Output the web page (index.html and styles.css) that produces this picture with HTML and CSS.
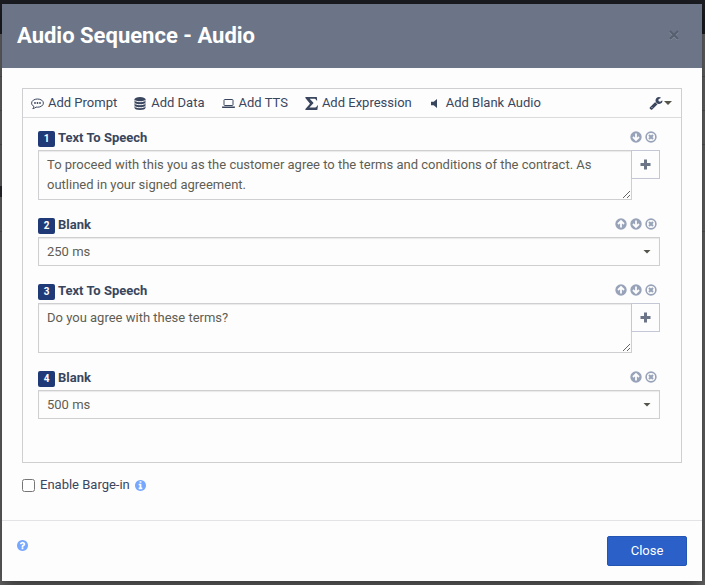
FILE: index.html
```html
<!DOCTYPE html>
<html lang="en">
<head>
<meta charset="utf-8">
<meta name="viewport" content="width=device-width, initial-scale=1">
<title>Audio Sequence - Audio</title>
<link rel="stylesheet" href="styles.css">
</head>
<body>
<svg class="sprite" aria-hidden="true">
  <symbol id="up" viewBox="0 0 12 12"><circle cx="6" cy="6" r="5.700" fill="currentColor"/><path d="M6 9.600V3M3 6 6 3l3 3" fill="none" stroke="#fdfdfd" stroke-width="1.800"/></symbol>
  <symbol id="down" viewBox="0 0 12 12"><circle cx="6" cy="6" r="5.700" fill="currentColor"/><path d="M6 2.400V9M3 6l3 3 3-3" fill="none" stroke="#fdfdfd" stroke-width="1.800"/></symbol>
  <symbol id="remove" viewBox="0 0 12 12"><circle cx="6" cy="6" r="4.900" fill="none" stroke="currentColor" stroke-width="1.600"/><path d="m4 4 4 4m0-4L4 8" stroke="currentColor" stroke-width="2.100"/></symbol>
  <symbol id="plus" viewBox="0 0 12 12"><path d="M5.500.500v10M.500 5.500h10" stroke="currentColor" stroke-width="3"/></symbol>
</svg>
<div class="modal" role="dialog" aria-labelledby="title">
  <header class="modal-header">
    <h1 id="title">Audio Sequence - Audio</h1>
    <button class="dismiss" type="button" aria-label="Dismiss"><svg viewBox="0 0 10 10"><path d="m1 2 8 8m0-8-8 8" stroke="#858d9c" stroke-width="2"/><path d="m1 1 8 8m0-8-8 8" stroke="#565f6e" stroke-width="2"/></svg></button>
  </header>
  <main class="modal-body">
    <section class="panel">
      <div class="toolbar">
        <button class="tool" type="button"><svg viewBox="0 0 13 13"><path d="M6.500 2C9.700 2 12.400 3.700 12.400 6.100S9.700 10.200 6.500 10.200c-.5 0-1 0-1.400-.1-1 .8-2 1.300-3.300 1.500.6-.6 1-1.300 1.100-2.200C1.500 8.700.6 7.500.6 6.100.6 3.700 3.300 2 6.500 2Z" fill="none" stroke="currentColor"/><circle cx="4" cy="6" r=".9" fill="currentColor"/><circle cx="6.500" cy="6" r=".9" fill="currentColor"/><circle cx="9" cy="6" r=".9" fill="currentColor"/></svg>Add Prompt</button>
        <button class="tool" type="button"><svg viewBox="0 0 13 13"><path d="M.5 2.300v8.400C.5 12 3 13 6 13s5.500-1 5.500-2.300V2.300C11.500 1 9 0 6 0S.5 1 .5 2.300Z" fill="currentColor"/><path d="M.5 3.200c1 1 3 1.500 5.500 1.500s4.500-.5 5.500-1.500M.5 6.200c1 1 3 1.500 5.500 1.500s4.500-.5 5.500-1.500M.5 9.200c1 1 3 1.500 5.500 1.500s4.500-.5 5.500-1.500" fill="none" stroke="#fdfdfd"/></svg>Add Data</button>
        <button class="tool" type="button"><svg viewBox="0 0 13 13"><rect x="2" y="2.500" width="9" height="6" rx=".7" fill="none" stroke="currentColor"/><path d="M0 9.500h13v.7c0 .5-.6.900-1.300.9H1.300C.6 11.100 0 10.700 0 10.200Z" fill="currentColor"/></svg>Add TTS</button>
        <button class="tool" type="button"><svg viewBox="0 0 13 13"><path d="M.4 0h11.400l.4 3.500h-.8c-.4-1.200-1-1.700-2.400-1.700H4.700l3.900 4.300-4.200 4.500h5c1.500 0 2.300-.6 2.800-2h.8l-.7 4.300H.4V12L5 6.700.4 1Z" fill="currentColor"/></svg>Add Expression</button>
        <button class="tool" type="button"><svg viewBox="0 0 13 13"><path d="M8 2v9L4.700 8.200H2V4.800h2.700Z" fill="currentColor"/></svg>Add Blank Audio</button>
        <button class="settings" type="button" aria-label="Settings"><svg viewBox="0 0 1792 1792"><path fill="currentColor" d="M448 1472q0-26-19-45t-45-19-45 19-19 45 19 45 45 19 45-19 19-45zm644-420l-682 682q-37 37-90 37-52 0-91-37l-106-108q-38-36-38-90 0-53 38-91l681-681q39 98 114.500 173.500t173.500 114.500zm634-435q0 39-23 106-47 134-164.500 217.500t-258.500 83.500q-185 0-316.500-131.500t-131.500-316.500 131.500-316.500 316.500-131.500q58 0 121.500 16.500t107.500 46.500q16 11 16 28t-16 28l-293 169v224l193 107q5-3 79-48.500t135.500-81 70.500-35.500q15 0 23.500 10t8.500 25z"/></svg><span class="caret"></span></button>
      </div>
      <ol class="steps">
        <li>
          <div class="step-head"><span class="badge">1</span><label for="s1">Text To Speech</label>
            <span class="actions"><button type="button" aria-label="Move down"><svg><use href="#down"/></svg></button><button type="button" aria-label="Remove"><svg><use href="#remove"/></svg></button></span></div>
          <div class="speech"><textarea id="s1" rows="2">To proceed with this you as the customer agree to the terms and conditions of the contract. As outlined in your signed agreement.</textarea><button class="insert" type="button" aria-label="Insert"><svg><use href="#plus"/></svg></button></div>
        </li>
        <li>
          <div class="step-head"><span class="badge">2</span><label for="s2">Blank</label>
            <span class="actions"><button type="button" aria-label="Move up"><svg><use href="#up"/></svg></button><button type="button" aria-label="Move down"><svg><use href="#down"/></svg></button><button type="button" aria-label="Remove"><svg><use href="#remove"/></svg></button></span></div>
          <div class="pick"><select id="s2"><option>250 ms</option></select><span class="caret"></span></div>
        </li>
        <li>
          <div class="step-head"><span class="badge">3</span><label for="s3">Text To Speech</label>
            <span class="actions"><button type="button" aria-label="Move up"><svg><use href="#up"/></svg></button><button type="button" aria-label="Move down"><svg><use href="#down"/></svg></button><button type="button" aria-label="Remove"><svg><use href="#remove"/></svg></button></span></div>
          <div class="speech"><textarea id="s3" rows="2">Do you agree with these terms?</textarea><button class="insert" type="button" aria-label="Insert"><svg><use href="#plus"/></svg></button></div>
        </li>
        <li>
          <div class="step-head"><span class="badge">4</span><label for="s4">Blank</label>
            <span class="actions"><button type="button" aria-label="Move up"><svg><use href="#up"/></svg></button><button type="button" aria-label="Remove"><svg><use href="#remove"/></svg></button></span></div>
          <div class="pick"><select id="s4"><option>500 ms</option></select><span class="caret"></span></div>
        </li>
      </ol>
    </section>
    <div class="option">
      <input type="checkbox" id="barge"><label for="barge">Enable Barge-in</label>
      <svg class="hint" viewBox="128 128 1536 1536"><path fill="currentColor" d="M1152 1376v-160q0-14-9-23t-23-9h-96v-512q0-14-9-23t-23-9h-320q-14 0-23 9t-9 23v160q0 14 9 23t23 9h96v320h-96q-14 0-23 9t-9 23v160q0 14 9 23t23 9h448q14 0 23-9t9-23zm-128-896v-160q0-14-9-23t-23-9h-192q-14 0-23 9t-9 23v160q0 14 9 23t23 9h192q14 0 23-9t9-23zm640 416q0 209-103 385.500t-279.500 279.500-385.500 103-385.500-103-279.500-279.500-103-385.500 103-385.500 279.500-279.500 385.500-103 385.500 103 279.500 279.500 103 385.500z"/></svg>
    </div>
  </main>
  <footer class="modal-footer">
    <a class="help" href="#" aria-label="Help"><svg class="hint" viewBox="128 128 1536 1536"><path fill="currentColor" d="M1024 1376v-192q0-14-9-23t-23-9h-192q-14 0-23 9t-9 23v192q0 14 9 23t23 9h192q14 0 23-9t9-23zm256-672q0-88-55.500-163t-138.500-116-170-41q-243 0-371 213-15 24 8 42l132 100q7 6 19 6 16 0 25-12 53-68 86-92 34-24 86-24 48 0 85.500 26t37.500 59q0 38-20 61t-68 45q-63 28-115.500 86.500t-52.500 125.500v36q0 14 9 23t23 9h192q14 0 23-9t9-23q0-19 21.500-49.500t54.500-49.500q32-18 49-28.500t46-35 44.500-48 28-60.500 12.500-81zm384 192q0 209-103 385.500t-279.500 279.500-385.500 103-385.500-103-279.500-279.500-103-385.500 103-385.500 279.500-279.500 385.500-103 385.500 103 279.500 279.500 103 385.500z"/></svg></a>
    <button class="close" type="button">Close</button>
  </footer>
</div>
</body>
</html>
```
FILE: styles.css
```css
* { box-sizing: border-box; }
html { min-height: 100%; background: #666; }
body {
  margin: 0;
  padding: 4px 3px 4px 2px;
  min-height: 100vh;
  background:
    linear-gradient(#1b1d22, #1b1d22) 0 0 / 100% 34px no-repeat,
    linear-gradient(#555, #555) 0 76px / 100% 1px no-repeat,
    linear-gradient(#555, #555) 0 110px / 100% 1px no-repeat,
    linear-gradient(#555, #555) 0 144px / 100% 1px no-repeat,
    linear-gradient(#2a2c30, #2a2c30) 0 186px / 2px 11px no-repeat,
    linear-gradient(#555, #555) 0 231px / 100% 1px no-repeat,
    #666;
  font: 13px/20px Roboto, sans-serif;
  color: #3a465e;
}
button {
  font: inherit;
  color: inherit;
  background: none;
  border: 0;
  padding: 0;
  cursor: pointer;
}
svg { display: block; flex: none; }
.sprite { width: 0; height: 0; position: absolute; }
.modal { background: #fdfdfd; box-shadow: 0 5px 15px rgba(0, 0, 0, .5); }
.modal-header {
  display: flex;
  align-items: center;
  justify-content: space-between;
  height: 64px;
  padding: 0 23px 0 15px;
  background: #6c7587;
}
h1 { margin: 0; font-size: 22px; line-height: 30px; font-weight: 700; color: #fff; }
.dismiss { padding-bottom: 2px; }
.dismiss svg { width: 10px; height: 10px; }
.modal-body { padding: 20px 20px 25px; }
.panel { border: 1px solid #cfcfd1; min-height: 375px; }
.toolbar {
  display: flex;
  align-items: center;
  gap: 17px;
  height: 29px;
  padding: 0 9px 0 8px;
  border-bottom: 1px solid #dcdcde;
}
.tool { display: flex; align-items: center; gap: 4px; white-space: nowrap; }
.tool svg { width: 13px; height: 13px; }
.settings { display: flex; align-items: center; gap: 1px; margin-left: auto; }
.settings svg { width: 14px; height: 14px; }
.caret {
  width: 8px;
  height: 4px;
  background: #55544a;
  clip-path: polygon(0 0, 100% 0, 50% 100%);
}
.steps {
  list-style: none;
  margin: 0;
  padding: 13px 21px 24px 15px;
  display: grid;
  gap: 18px;
}
.step-head { display: flex; align-items: flex-start; height: 19px; gap: 3px; }
.badge {
  width: 17px;
  height: 16px;
  border-radius: 2px;
  background: #1f3a76;
  color: #fff;
  font-size: 10px;
  line-height: 16px;
  font-weight: 700;
  text-align: center;
}
.step-head label { font-weight: 700; line-height: 14px; }
.actions { display: flex; gap: 3px; margin-left: auto; padding-right: 3px; color: #98a3b9; }
.actions svg { width: 12px; height: 12px; }
.speech { display: flex; align-items: flex-start; }
textarea {
  display: block;
  flex: 1;
  min-width: 0;
  height: 50px;
  margin: 0;
  padding: 4px 8px;
  border: 1px solid #cfcfd1;
  border-radius: 0;
  background: #fdfdfd;
  box-shadow: inset 0 1px 1px rgba(0, 0, 0, .08);
  font: inherit;
  color: #5f5e54;
  overflow: hidden;
  resize: vertical;
}
.insert {
  display: grid;
  place-items: center;
  width: 29px;
  height: 29px;
  margin-left: -1px;
  border: 1px solid #c4c8d6;
  background: #fdfdfd;
  color: #6c7587;
}
.insert svg { width: 12px; height: 12px; }
.pick { display: grid; align-items: center; }
.pick > * { grid-area: 1 / 1; }
.pick .caret { justify-self: end; margin-right: 9px; pointer-events: none; }
select {
  appearance: none;
  width: 100%;
  height: 29px;
  margin: 0;
  padding: 0 8px;
  border: 1px solid #cfcfd1;
  border-radius: 0;
  background: #fdfdfd;
  box-shadow: inset 0 1px 1px rgba(0, 0, 0, .08);
  font: inherit;
  color: #5f5e54;
}
.option { display: flex; align-items: center; margin-top: 12px; gap: 5px; }
.option input { width: 13px; height: 13px; margin: 0; }
.hint { width: 11px; height: 11px; color: #76a8ff; }
.modal-footer {
  display: flex;
  align-items: flex-start;
  justify-content: space-between;
  padding: 15px;
  border-top: 1px solid #e3e3e5;
}
.help { padding-top: 4px; }
.close {
  width: 80px;
  height: 30px;
  border: 1px solid #2355b5;
  border-radius: 2px;
  background: #2a60c8;
  color: #fff;
}
```
